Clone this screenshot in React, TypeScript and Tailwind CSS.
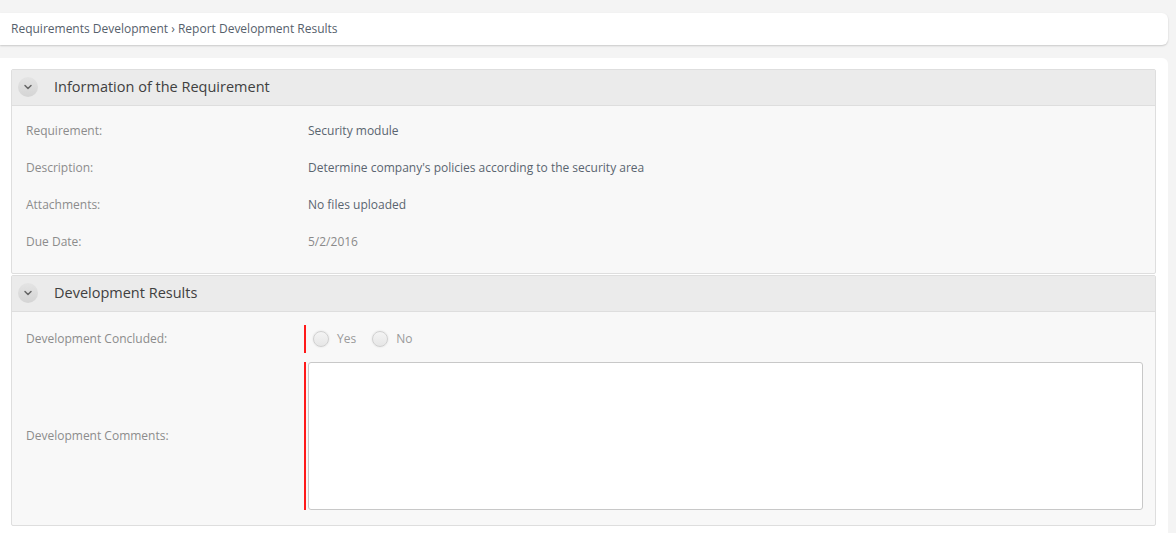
import { ChevronDown } from "lucide-react";

const font = { fontFamily: '"Open Sans", "Liberation Sans", sans-serif' };

function SectionHeader({ title }: { title: string }) {
  return (
    <div className="flex items-center h-[36px] pb-[2px] bg-[#ebebeb] border-b border-[#dedede]">
      <div className="ml-[6px] w-[20px] h-[20px] rounded-full bg-gradient-to-b from-[#e4e4e4] to-[#d4d4d4] flex items-center justify-center">
        <ChevronDown size={12} strokeWidth={3} className="text-[#666]" />
      </div>
      <span className="ml-[16px] text-[14.5px] text-[#404040]">{title}</span>
    </div>
  );
}

function InfoRow({ label, value, light }: { label: string; value: string; light?: boolean }) {
  return (
    <div className="flex items-center h-[37px]">
      <div className="w-[282px] text-[12px] text-[#8c8c8c]">{label}</div>
      <div className={`text-[12px] ${light ? "text-[#8a8a8a]" : "text-[#5a6570]"}`}>{value}</div>
    </div>
  );
}

function Radio({ label }: { label: string }) {
  return (
    <label className="flex items-center gap-[8px] mr-[16px]">
      <span className="w-[16px] h-[16px] rounded-full border border-[#d0d0d0] bg-gradient-to-b from-[#f4f4f4] to-[#e6e6e6] shadow-[0_0_2px_rgba(0,0,0,0.12)]" />
      <span className="text-[12px] text-[#9a9a9a]">{label}</span>
    </label>
  );
}

export default function App() {
  return (
    <div className="w-full h-[533px] bg-[#f4f4f4] overflow-hidden" style={font}>
      <div className="pt-[13px] pr-[8px]">
        <div className="h-[32px] bg-white rounded-r-[6px] shadow-[0_1px_2px_rgba(0,0,0,0.18)] flex items-center px-[11px] text-[12px] text-[#56616c]">
          Requirements Development › Report Development Results
        </div>
      </div>
      <div className="mt-[13px] mr-[8px] bg-white rounded-tr-[6px] pl-[11px] pr-[12px] pt-[11px] pb-[10px]">
        <div className="border border-[#dedede] bg-[#f8f8f8] rounded-[2px]">
          <SectionHeader title="Information of the Requirement" />
          <div className="pl-[14px] pt-[6px] pb-[13px]">
            <InfoRow label="Requirement:" value="Security module" />
            <InfoRow label="Description:" value="Determine company's policies according to the security area" />
            <InfoRow label="Attachments:" value="No files uploaded" />
            <InfoRow label="Due Date:" value="5/2/2016" light />
          </div>
        </div>
        <div className="mt-[1px] border border-[#dedede] bg-[#f8f8f8] rounded-[2px]">
          <SectionHeader title="Development Results" />
          <div className="pl-[14px] pr-[12px] pt-[13px] pb-[15px]">
            <div className="flex items-center h-[28px]">
              <div className="w-[278px] text-[12px] text-[#8c8c8c]">Development Concluded:</div>
              <div className="h-full border-l-[2px] border-[#ff1a1a] flex items-center pl-[7px]">
                <Radio label="Yes" />
                <Radio label="No" />
              </div>
            </div>
            <div className="flex items-center mt-[9px]">
              <div className="w-[278px] text-[12px] text-[#8c8c8c]">Development Comments:</div>
              <div className="flex-1 border-l-[2px] border-[#ff1a1a] pl-[2px]">
                <textarea className="block w-full h-[148px] bg-white border border-[#c8c8c8] rounded-[3px] resize-none outline-none" />
              </div>
            </div>
          </div>
        </div>
      </div>
    </div>
  );
}
